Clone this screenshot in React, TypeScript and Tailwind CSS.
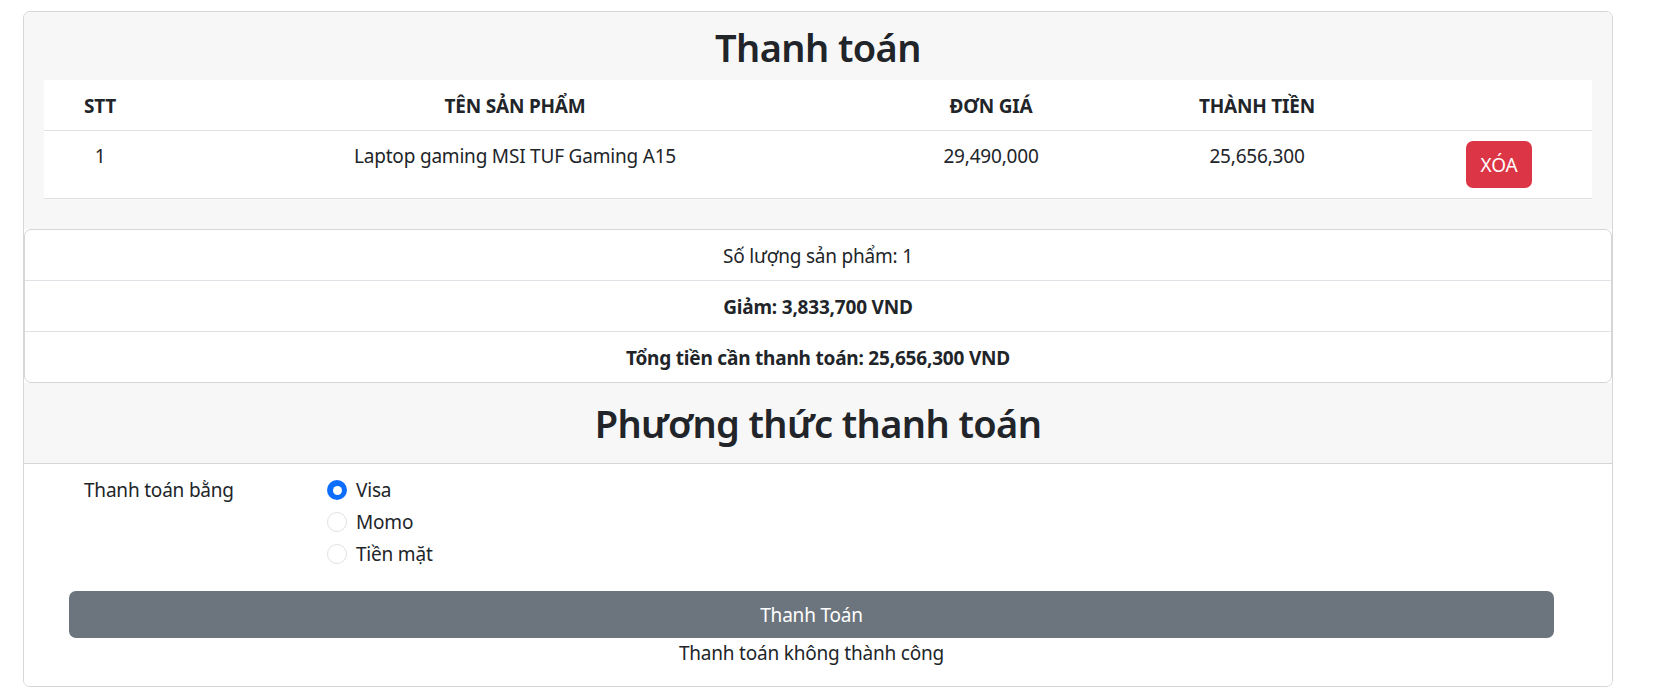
import { useState } from 'react';

interface CartItem {
  name: string;
  price: string;
  total: string;
}

const items: CartItem[] = [
  { name: 'Laptop gaming MSI TUF Gaming A15', price: '29,490,000', total: '25,656,300' },
];

const methods = [
  { id: 'visa', label: 'Visa' },
  { id: 'momo', label: 'Momo' },
  { id: 'cash', label: 'Tiền mặt' },
];

export default function App() {
  const [method, setMethod] = useState('visa');

  return (
    <div className="min-h-screen bg-white pl-[23px] pt-[11px] font-['Noto_Sans','Open_Sans',sans-serif] text-[19px] leading-[30px] tracking-[-0.2px] text-[#212529]">
      <div className="w-[1590px] overflow-hidden rounded-[7px] border border-[#d6d6d6]">
        {/* Cart */}
        <div className="bg-[#f7f7f7] px-[20px] pb-[30px] pt-[11px]">
          <h2 className="mb-[9px] text-center text-[38px] font-semibold leading-[48px] tracking-[-0.6px]">Thanh toán</h2>
          <table className="w-full table-fixed border-collapse bg-white text-center">
            <colgroup>
              <col className="w-[112px]" />
              <col className="w-[718px]" />
              <col className="w-[234px]" />
              <col className="w-[298px]" />
              <col className="w-[186px]" />
            </colgroup>
            <thead>
              <tr className="border-b border-[#dee2e6]">
                <th className="pb-[9px] pt-[11px] font-bold uppercase">STT</th>
                <th className="pb-[9px] pt-[11px] font-bold uppercase">Tên sản phẩm</th>
                <th className="pb-[9px] pt-[11px] font-bold uppercase">Đơn giá</th>
                <th className="pb-[9px] pt-[11px] font-bold uppercase">Thành tiền</th>
                <th className="py-[10px]"></th>
              </tr>
            </thead>
            <tbody>
              {items.map((item, i) => (
                <tr key={i} className="border-b border-[#dee2e6]">
                  <td className="py-[10px] align-top">{i + 1}</td>
                  <td className="py-[10px] align-top">{item.name}</td>
                  <td className="py-[10px] align-top">{item.price}</td>
                  <td className="py-[10px] align-top">{item.total}</td>
                  <td className="py-[10px] align-top">
                    <button className="h-[47px] rounded-[7px] bg-[#dc3545] px-[15px] text-white">XÓA</button>
                  </td>
                </tr>
              ))}
            </tbody>
          </table>
        </div>

        {/* Summary */}
        <ul className="divide-y divide-[#dee2e6] rounded-[7px] border border-[#d6d6d6] bg-white text-center">
          <li className="pb-[9px] pt-[11px]">Số lượng sản phẩm: 1</li>
          <li className="pb-[9px] pt-[11px] font-bold">Giảm: 3,833,700 VND</li>
          <li className="pb-[9px] pt-[11px] font-bold">Tổng tiền cần thanh toán: 25,656,300 VND</li>
        </ul>

        {/* Payment method */}
        <div className="border-b border-[#d6d6d6] bg-[#f7f7f7] py-[16px]">
          <h2 className="text-center text-[38px] font-semibold leading-[48px] tracking-[-0.6px]">Phương thức thanh toán</h2>
        </div>

        <div className="bg-white px-[45px] pb-[18px] pt-[11px]">
          <div className="flex">
            <div className="w-[258px] pl-[15px]">Thanh toán bằng</div>
            <div className="flex flex-col gap-[2px]">
              {methods.map((m) => (
                <label key={m.id} className="flex h-[30px] cursor-pointer items-center gap-[9px]">
                  <input
                    type="radio"
                    name="method"
                    className="sr-only"
                    checked={method === m.id}
                    onChange={() => setMethod(m.id)}
                  />
                  {method === m.id ? (
                    <span className="flex h-[20px] w-[20px] items-center justify-center rounded-full bg-[#0d6efd]">
                      <span className="h-[9px] w-[9px] rounded-full bg-white" />
                    </span>
                  ) : (
                    <span className="h-[20px] w-[20px] rounded-full border border-[#dee2e6] bg-white" />
                  )}
                  <span>{m.label}</span>
                </label>
              ))}
            </div>
          </div>
          <button className="mt-[22px] flex h-[47px] w-[1485px] items-center justify-center rounded-[7px] bg-[#6c757d] text-white">
            Thanh Toán
          </button>
          <p className="w-[1485px] text-center">Thanh toán không thành công</p>
        </div>
      </div>
    </div>
  );
}
